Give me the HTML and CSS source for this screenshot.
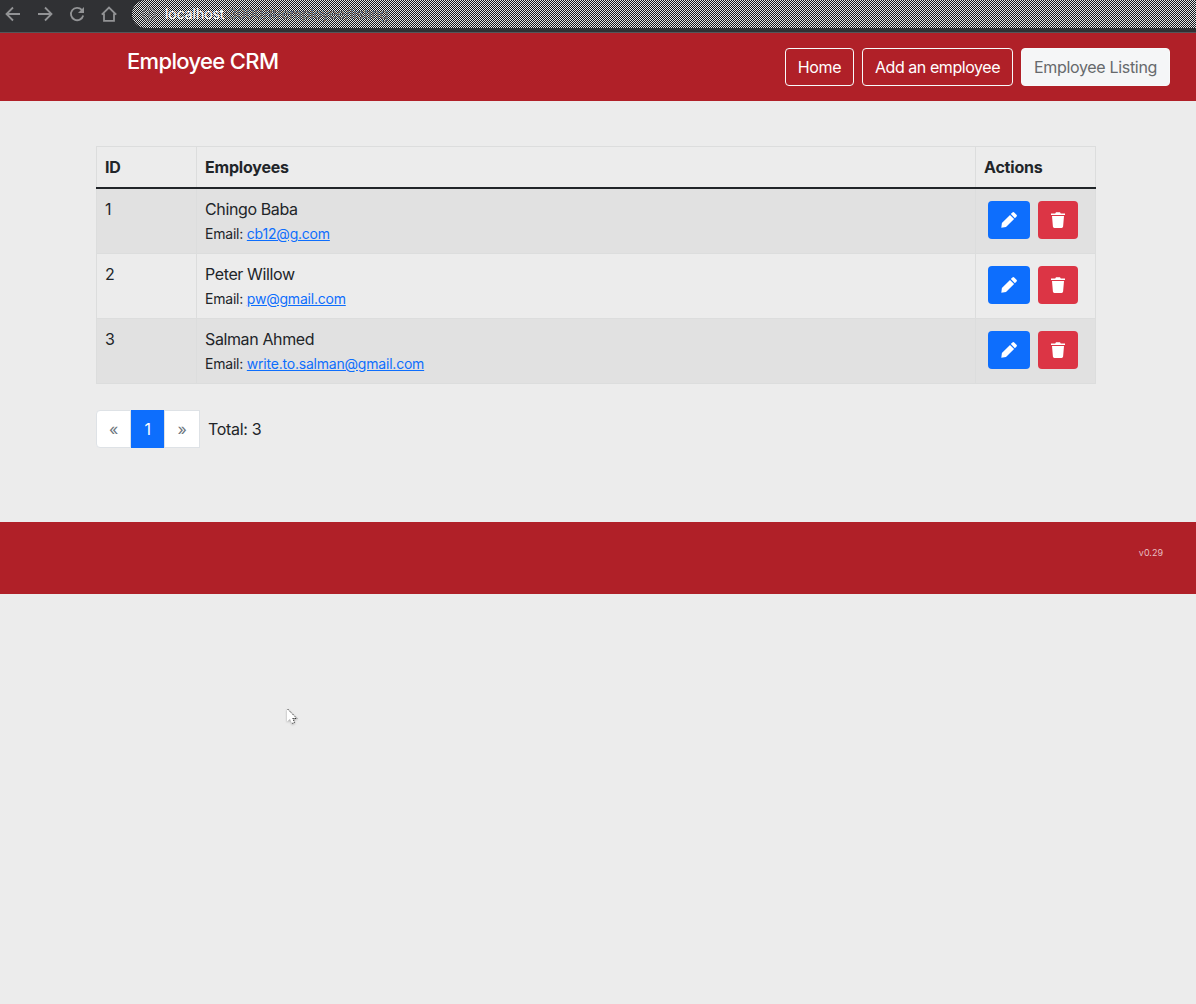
FILE: index.html
```html
<!DOCTYPE html>
<html lang="en">
<head>
<meta charset="utf-8">
<title>Employee CRM</title>
<link rel="stylesheet" href="styles.css">
</head>
<body>
<svg class="defs" width="0" height="0" aria-hidden="true">
  <symbol id="edit" viewBox="0 0 16 16"><path d="M11.400.5a1.300 1.300 0 0 1 1.800 0l2.300 2.300a1.300 1.300 0 0 1 0 1.800L13.900 6.200 9.800 2.100zM9 2.900L13.100 7 5 15.100.3 15.700.9 11z"/></symbol>
  <symbol id="trash" viewBox="0 0 14 16"><path d="M0 1.400h4.200L5 .2h4l.8 1.200H14v1.500H0zM1 4h12l-.9 10.600a1.500 1.500 0 0 1-1.500 1.400H3.400a1.500 1.500 0 0 1-1.500-1.400z"/></symbol>
</svg>
<div class="toolbar">
  <svg class="nav-icon" viewBox="0 0 16 16"><path d="M15 8H2M8 1.500L1.500 8 8 14.500"/></svg>
  <svg class="nav-icon" viewBox="0 0 16 16"><path d="M1 8h13M8 1.500L14.500 8 8 14.500"/></svg>
  <svg class="nav-icon" viewBox="0 0 16 16"><path d="M12.800 3.900A6.200 6.200 0 1 0 14.200 9.500"/><path class="solid" d="M15 1v6H9z"/></svg>
  <svg class="nav-icon" viewBox="0 0 16 16"><path d="M.8 8.700L8 1.500l7.200 7.200M3 7.500v7.300h10V7.500"/></svg>
  <div class="address">
    <svg class="info" viewBox="0 0 14 14"><circle cx="7" cy="7" r="6"/><path d="M7 6.200v4M7 3.500v1.400"/></svg>
    <span class="host">localhost</span><span class="path">:3000/#/employee/listing</span>
  </div>
</div>
<header class="header">
  <h1 class="brand">Employee CRM</h1>
  <nav class="menu">
    <a class="menu-btn home">Home</a>
    <a class="menu-btn add">Add an employee</a>
    <a class="menu-btn active">Employee Listing</a>
  </nav>
</header>
<main class="content">
  <table class="table">
    <thead><tr><th class="col-id">ID</th><th>Employees</th><th class="col-actions">Actions</th></tr></thead>
    <tbody>
      <tr><td>1</td><td><div class="name">Chingo Baba</div><div class="email">Email: <a>cb12@g.com</a></div></td>
        <td><div class="actions"><button class="btn edit"><svg><use href="#edit"/></svg></button><button class="btn del"><svg><use href="#trash"/></svg></button></div></td></tr>
      <tr><td>2</td><td><div class="name">Peter Willow</div><div class="email">Email: <a>pw@gmail.com</a></div></td>
        <td><div class="actions"><button class="btn edit"><svg><use href="#edit"/></svg></button><button class="btn del"><svg><use href="#trash"/></svg></button></div></td></tr>
      <tr><td>3</td><td><div class="name">Salman Ahmed</div><div class="email">Email: <a>write.to.salman@gmail.com</a></div></td>
        <td><div class="actions"><button class="btn edit"><svg><use href="#edit"/></svg></button><button class="btn del"><svg><use href="#trash"/></svg></button></div></td></tr>
    </tbody>
  </table>
  <div class="pager">
    <a class="page first">«</a><a class="page current">1</a><a class="page last">»</a>
    <span class="total">Total: 3</span>
  </div>
</main>
<footer class="footer">v0.29</footer>
<svg class="cursor" viewBox="0 0 12 18"><path class="fill" d="M1 .5v13l3-2.600 2 4.600 2.600-1.100-2-4.400H11z"/><path class="edge" d="M1.500 1L11 10.500H6.800L8.600 14.400 6 15.500"/></svg>
</body>
</html>
```
FILE: styles.css
```css
* { box-sizing: border-box; }
body {
  margin: 0;
  height: 1004px;
  overflow: hidden;
  background: #ececec;
  color: #212529;
  font: 16px/24px Inter, "Liberation Sans", sans-serif;
  letter-spacing: -0.32px;
}
.defs { position: absolute; }
.toolbar {
  height: 33px;
  display: flex;
  align-items: flex-start;
  gap: 16px;
  padding-left: 5px;
  background: #303134;
  border-bottom: 1px solid #555659;
}
.nav-icon {
  width: 16px;
  height: 16px;
  margin-top: 6px;
  fill: none;
  stroke: #929395;
  stroke-width: 1.8;
}
.nav-icon .solid { fill: #929395; stroke: none; }
.address {
  flex: 1;
  height: 28px;
  margin-left: -1px;
  padding-left: 10px;
  display: flex;
  align-items: center;
  border-radius: 14px 0 0 14px;
  background: repeating-conic-gradient(#141518 0 25%, #e4e4e4 0 50%) 0 0 / 2px 2px;
  font-size: 14px;
  letter-spacing: -0.05px;
}
.info {
  width: 14px;
  height: 14px;
  margin-right: 9px;
  fill: none;
  stroke: #77787b;
  stroke-width: 1.5;
}
.host { color: #fff; }
.path { color: #66676a; letter-spacing: -0.12px; }
.header {
  height: 68px;
  display: flex;
  justify-content: space-between;
  align-items: flex-start;
  padding: 15px 26px 0 127px;
  background: #b02028;
  color: #fff;
}
.brand {
  margin: -2px 0 0;
  font-size: 22px;
  line-height: 30px;
  font-weight: 500;
  letter-spacing: -0.66px;
}
.menu { display: flex; gap: 8px; }
.menu-btn {
  height: 38px;
  border: 1px solid #f8f9fa;
  border-radius: 4px;
  line-height: 36px;
  text-align: center;
  white-space: nowrap;
}
.home { width: 69px; }
.add { width: 151px; letter-spacing: -0.44px; }
.active { width: 149px; background: #f5f6f7; color: #66696c; }
.content { height: 421px; padding: 45px 100px 0 96px; }
.table {
  width: 1000px;
  table-layout: fixed;
  border-collapse: collapse;
}
.table th, .table td {
  border: 1px solid #dcdddd;
  padding: 8px;
  text-align: left;
  vertical-align: top;
}
.table th { height: 41px; font-weight: 700; letter-spacing: -0.2px; border-bottom: 2px solid #212529; }
.table td { height: 65px; }
.name { letter-spacing: -0.38px; }
.table tbody tr:nth-child(odd) { background: #e1e1e1; }
.col-id { width: 100px; }
.col-actions { width: 120px; }
.email { font-size: 14px; line-height: 21px; margin-top: 2px; letter-spacing: -0.21px; }
.email a { color: #0d6efd; text-decoration: underline; }
.actions { display: flex; gap: 8px; padding: 4px; }
.btn {
  height: 38px;
  padding: 0;
  border: 0;
  border-radius: 4px;
  display: flex;
  align-items: center;
  justify-content: center;
}
.btn svg { height: 16px; fill: #fff; }
.edit { width: 42px; background: #0d6efd; }
.edit svg { width: 16px; }
.del { width: 40px; background: #dc3545; }
.del svg { width: 14px; }
.pager { display: flex; margin-top: 26px; }
.page {
  height: 38px;
  line-height: 36px;
  text-align: center;
  background: #fff;
  border: 1px solid #dee2e6;
  color: #6c757d;
}
.first { width: 35px; border-radius: 4px 0 0 4px; }
.current { width: 33px; background: #0d6efd; border-color: #0d6efd; color: #fff; }
.last { width: 36px; }
.total { margin-left: 8px; line-height: 38px; }
.footer {
  height: 72px;
  padding: 24px 33px 0;
  background: #b02028;
  color: #e6bfc1;
  font-size: 9px;
  line-height: 14px;
  text-align: right;
  letter-spacing: 0;
}
.cursor {
  position: absolute;
  left: 286px;
  top: 708px;
  width: 12px;
  height: 18px;
  filter: drop-shadow(0 1px 1px rgba(0, 0, 0, 0.3));
}
.cursor .fill { fill: #fff; }
.cursor .edge { fill: none; stroke: #333; stroke-width: 1; stroke-dasharray: 1.4 1; }
```
